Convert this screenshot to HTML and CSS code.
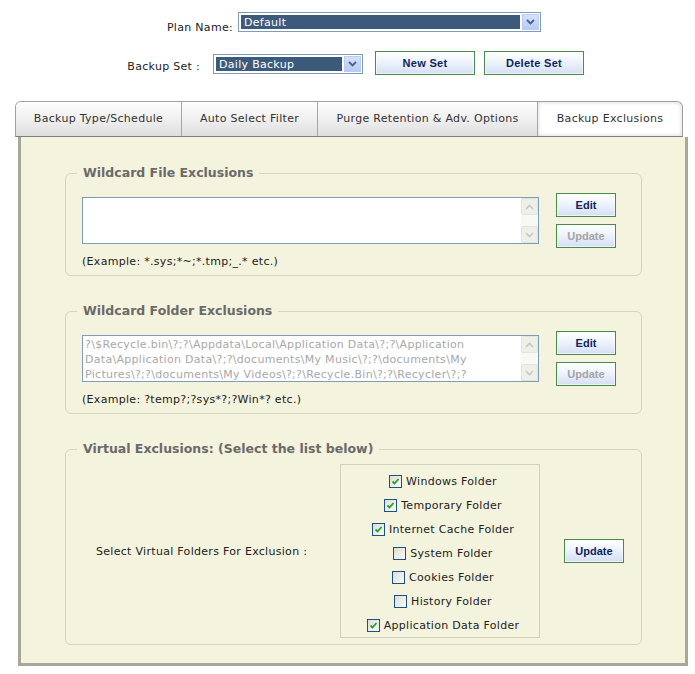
FILE: index.html
```html
<!DOCTYPE html>
<html lang="en">
<head>
    <meta charset="UTF-8">
    <meta name="viewport" content="width=device-width, initial-scale=1.0">
    <title>Backup Exclusions</title>
    <link rel="stylesheet" href="styles.css">
</head>
<body>

    <!-- plan / backup set selection -->
    <div class="plan-row">
        <label class="plan-label">Plan Name:</label>
        <div class="select plan-select">
            <span class="select-value">Default</span>
            <span class="select-arrow">
                <svg width="9" height="6" viewBox="0 0 9 6"><path d="M1 1 L4.5 4.5 L8 1" fill="none" stroke="#4d6185" stroke-width="1.8"/></svg>
            </span>
        </div>
    </div>

    <div class="set-row">
        <label class="set-label">Backup Set :</label>
        <div class="select set-select">
            <span class="select-value">Daily Backup</span>
            <span class="select-arrow">
                <svg width="9" height="6" viewBox="0 0 9 6"><path d="M1 1 L4.5 4.5 L8 1" fill="none" stroke="#4d6185" stroke-width="1.8"/></svg>
            </span>
        </div>
        <button class="btn btn-wide">New Set</button>
        <button class="btn btn-wide">Delete Set</button>
    </div>

    <!-- tabs -->
    <div class="tabs">
        <div class="tab tab-schedule">Backup Type/Schedule</div>
        <div class="tab tab-filter">Auto Select Filter</div>
        <div class="tab tab-purge">Purge Retention &amp; Adv. Options</div>
        <div class="tab tab-exclusions active">Backup Exclusions</div>
    </div>

    <div class="panel">

        <fieldset class="group">
            <legend>Wildcard File Exclusions</legend>
            <div class="group-row">
                <div class="group-main">
                    <div class="textbox">
                        <div class="textbox-text"></div>
                        <div class="scroll">
                            <span class="scroll-btn">
                                <svg width="9" height="6" viewBox="0 0 9 6"><path d="M1 5 L4.5 1.5 L8 5" fill="none" stroke="#c9c9c2" stroke-width="1.6"/></svg>
                            </span>
                            <span class="scroll-btn">
                                <svg width="9" height="6" viewBox="0 0 9 6"><path d="M1 1 L4.5 4.5 L8 1" fill="none" stroke="#c9c9c2" stroke-width="1.6"/></svg>
                            </span>
                        </div>
                    </div>
                    <div class="example">(Example: *.sys;*~;*.tmp;_.* etc.)</div>
                </div>
                <div class="group-buttons">
                    <button class="btn">Edit</button>
                    <button class="btn" disabled>Update</button>
                </div>
            </div>
        </fieldset>

        <fieldset class="group">
            <legend>Wildcard Folder Exclusions</legend>
            <div class="group-row">
                <div class="group-main">
                    <div class="textbox">
                        <div class="textbox-text muted">
                            <div>?\$Recycle.bin\?;?\Appdata\Local\Application Data\?;?\Application</div>
                            <div>Data\Application Data\?;?\documents\My Music\?;?\documents\My</div>
                            <div>Pictures\?;?\documents\My Videos\?;?\Recycle.Bin\?;?\Recycler\?;?</div>
                            <div>\System Volume Information\?;?\Temp\?;?\Temporary Internet</div>
                        </div>
                        <div class="scroll">
                            <span class="scroll-btn">
                                <svg width="9" height="6" viewBox="0 0 9 6"><path d="M1 5 L4.5 1.5 L8 5" fill="none" stroke="#c9c9c2" stroke-width="1.6"/></svg>
                            </span>
                            <span class="scroll-btn">
                                <svg width="9" height="6" viewBox="0 0 9 6"><path d="M1 1 L4.5 4.5 L8 1" fill="none" stroke="#c9c9c2" stroke-width="1.6"/></svg>
                            </span>
                        </div>
                    </div>
                    <div class="example">(Example: ?temp?;?sys*?;?Win*? etc.)</div>
                </div>
                <div class="group-buttons">
                    <button class="btn">Edit</button>
                    <button class="btn" disabled>Update</button>
                </div>
            </div>
        </fieldset>

        <fieldset class="group">
            <legend>Virtual Exclusions: (Select the list below)</legend>
            <div class="virtual-row">
                <div class="virtual-label">Select Virtual Folders For Exclusion :</div>
                <div class="folder-list">
                    <label class="folder"><span class="check on"></span>Windows Folder</label>
                    <label class="folder"><span class="check on"></span>Temporary Folder</label>
                    <label class="folder"><span class="check on"></span>Internet Cache Folder</label>
                    <label class="folder"><span class="check"></span>System Folder</label>
                    <label class="folder"><span class="check"></span>Cookies Folder</label>
                    <label class="folder"><span class="check"></span>History Folder</label>
                    <label class="folder"><span class="check on"></span>Application Data Folder</label>
                </div>
                <button class="btn">Update</button>
            </div>
        </fieldset>

    </div>

</body>
</html>
```

FILE: styles.css
```css
body {
    font-family: "DejaVu Sans", Verdana, sans-serif;
    font-size: 11px;
    letter-spacing: 0.3px;
    color: #222;
    background-color: #fff;
    margin: 0;
    padding: 0;
}

/* top selection rows */
.plan-row {
    display: flex;
    align-items: flex-start;
    padding-top: 12px;
}
.plan-label {
    width: 233px;
    text-align: right;
    padding-top: 9px;
    line-height: 14px;
    margin-right: 5px;
}
.set-row {
    display: flex;
    align-items: flex-start;
    margin-top: 16px;
}
.set-label {
    width: 200px;
    text-align: right;
    padding-top: 9px;
    line-height: 14px;
    margin-right: 13px;
}
.select {
    display: flex;
    box-sizing: border-box;
    height: 20px;
    border: 1px solid #7f9db9;
    background-color: #fff;
    padding: 1px;
}
.plan-select {
    width: 303px;
}
.set-select {
    width: 150px;
    margin-top: 3px;
    margin-right: 12px;
}
.select-value {
    flex: 1;
    margin: 1px 2px 1px 1px;
    padding-left: 3px;
    background-color: #3d5a7a;
    color: #fff;
    line-height: 16px;
}
.select-arrow {
    display: flex;
    align-items: center;
    justify-content: center;
    width: 17px;
    box-sizing: border-box;
    border: 1px solid #bccdf5;
    background: linear-gradient(#d5e1fc, #b7caf5);
}

/* buttons */
.btn {
    box-sizing: border-box;
    flex-shrink: 0;
    width: 60px;
    height: 24px;
    padding: 0;
    font-family: "Liberation Sans", Arial, sans-serif;
    font-size: 11px;
    font-weight: bold;
    letter-spacing: 0;
    color: #0c2461;
    border: 1px solid #4a8a4a;
    background: linear-gradient(#ffffff, #eef3fc 45%, #d4dff4);
    box-shadow: inset 0 0 0 1px rgba(255, 255, 255, 0.6);
    cursor: pointer;
}
.btn:disabled {
    color: #a4a4a4;
    cursor: default;
}
.btn-wide {
    width: 100px;
    margin-right: 9px;
    letter-spacing: 0.3px;
}

/* tabs */
.tabs {
    display: flex;
    width: 668px;
    box-sizing: border-box;
    height: 36px;
    margin: 26px 0 0 15px;
    border: 1px solid #a0a0a0;
    border-bottom-color: #7d7d7d;
    border-radius: 6px 6px 0 0;
    overflow: hidden;
}
.tab {
    line-height: 34px;
    text-align: center;
    color: #333;
    background: linear-gradient(#fdfdfd, #f0f0f0 50%, #dedede);
    box-sizing: border-box;
}
.tab + .tab {
    border-left: 1px solid #a6a6a6;
}
.tab-schedule {
    width: 165px;
}
.tab-filter {
    width: 136px;
}
.tab-purge {
    width: 220px;
}
.tab-exclusions {
    width: 145px;
}
.tab.active {
    background: #fff;
    box-shadow: inset 0 0 4px rgba(0, 0, 0, 0.18);
    border-radius: 0 6px 0 0;
}

/* content panel */
.panel {
    width: 670px;
    box-sizing: border-box;
    margin-left: 18px;
    padding: 28px 43px 18px 44px;
    background-color: #f4f3dd;
    border: 3px solid #a9a898;
    border-top: none;
}
.group {
    margin: 0;
    min-width: 0;
    padding: 12px 25px 6px 11px;
    border: 1px solid #d5d3c0;
    border-radius: 6px;
}
.group + .group {
    margin-top: 27px;
}
.group legend {
    padding: 0 6px;
    font-size: 12.5px;
    font-weight: bold;
    letter-spacing: 0;
    line-height: 16px;
    color: #6a6a6a;
}
.group-row {
    display: flex;
    align-items: flex-start;
    margin-left: 5px;
}
.group-main {
    width: 457px;
    margin-top: 4px;
    margin-right: 17px;
}
.textbox {
    display: flex;
    height: 47px;
    box-sizing: border-box;
    border: 1px solid #7f9db9;
    background-color: #fff;
    overflow: hidden;
}
.textbox-text {
    flex: 1;
    padding: 1px 2px;
    line-height: 15px;
    white-space: nowrap;
    overflow: hidden;
}
.textbox-text.muted {
    color: #a8a8a8;
}
.scroll {
    display: flex;
    flex-direction: column;
    justify-content: space-between;
    width: 17px;
    background-color: #f8f8f5;
}
.scroll-btn {
    display: flex;
    align-items: center;
    justify-content: center;
    height: 17px;
    box-sizing: border-box;
    border: 1px solid #e4e4df;
    border-radius: 2px;
    background-color: #efefea;
}
.example {
    margin-top: 11px;
    line-height: 14px;
}
.group-buttons {
    display: flex;
    flex-direction: column;
    gap: 7px;
}

/* virtual exclusions */
.virtual-row {
    display: flex;
    align-items: center;
    margin: -5px -8px 0 5px;
}
.virtual-label {
    flex-shrink: 0;
    width: 258px;
    padding-left: 14px;
    box-sizing: border-box;
}
.folder-list {
    flex-shrink: 0;
    width: 200px;
    box-sizing: border-box;
    padding-top: 4px;
    border: 1px solid #d2d0bc;
    margin-right: 24px;
}
.folder {
    display: flex;
    align-items: center;
    justify-content: center;
    height: 24px;
    padding-left: 6px;
}
.check {
    width: 13px;
    height: 13px;
    box-sizing: border-box;
    margin-right: 4px;
    border: 1px solid #1c5180;
    background: linear-gradient(135deg, #dcdcd7, #fbfbf9);
}
.check.on {
    background:
        url("data:image/svg+xml,%3Csvg xmlns='http://www.w3.org/2000/svg' width='11' height='11'%3E%3Cpath d='M2.5 5.5 L4.5 7.5 L8.5 3' fill='none' stroke='%2321a121' stroke-width='1.8'/%3E%3C/svg%3E") no-repeat center,
        linear-gradient(135deg, #dcdcd7, #fbfbf9);
}
```
